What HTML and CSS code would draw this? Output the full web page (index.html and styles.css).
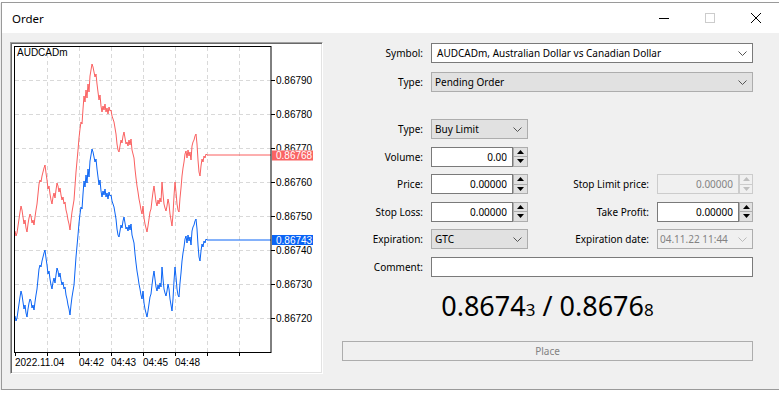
FILE: index.html
```html
<!DOCTYPE html>
<html>
<head>
    <meta charset="UTF-8">
    <title>Order</title>
    <link rel="stylesheet" href="styles.css">
</head>
<body>
    <div class="window">
        <div class="titlebar">
            <span class="title">Order</span>
            <div class="caption">
                <span class="cap-btn"><svg width="12" height="12" viewBox="0 0 12 12"><line x1="1" y1="6.5" x2="11" y2="6.5" stroke="#000"/></svg></span>
                <span class="cap-btn"><svg width="12" height="12" viewBox="0 0 12 12"><rect x="1.5" y="1.5" width="9" height="9" fill="none" stroke="#cccccc"/></svg></span>
                <span class="cap-btn"><svg width="12" height="12" viewBox="0 0 12 12"><path d="M1 1 L11 11 M11 1 L1 11" stroke="#000" stroke-width="1"/></svg></span>
            </div>
        </div>

        <div class="dialog">
            <div class="chart-box">
                <svg class="chart" width="309" height="328" viewBox="12 44 309 328">
                    <defs>
                        <polyline id="ticks" fill="none" points="16,317 17,322 18,319 19,312 20,305 21,298 22,292 23,296 24,303 25,310 26,306 27,314 28,318 29,310 30,304 31,300 32,302 33,309 34,306 35,311 36,303 37,296 38,290 39,280 40,270 41,266 42,268 43,262 44,258 45,254 46,251 47,259 48,266 49,275 50,272 51,280 52,286 53,290 54,283 55,279 56,284 57,276 58,269 59,272 60,278 61,274 62,281 63,286 64,283 65,290 66,288 67,296 68,300 69,306 70,310 71,316 72,306 73,298 74,292 75,286 76,272 77,258 78,247 79,236 80,224 81,215 82,208 83,210 84,195 85,182 86,188 87,176 88,184 89,170 90,178 91,162 92,156 93,150 94,153 95,158 96,163 97,160 98,170 99,178 100,186 101,181 102,192 103,198 104,192 105,196 106,190 107,198 108,194 109,200 110,193 111,197 112,196 113,202 114,205 115,208 116,214 117,220 118,230 119,236 120,238 121,232 122,226 123,229 124,222 125,218 126,224 127,230 128,228 129,232 130,226 131,231 132,225 133,236 134,240 135,244 136,255 137,264 138,272 139,278 140,285 141,290 142,296 143,300 144,292 145,304 146,310 147,314 148,318 149,312 150,305 151,298 152,295 153,286 154,278 155,272 156,280 157,288 158,292 159,286 160,290 161,284 162,288 163,268 164,280 165,290 166,294 167,297 168,292 169,285 170,290 171,300 172,306 173,312 174,300 175,282 176,268 177,278 178,290 179,296 180,298 181,284 182,274 183,262 184,254 185,248 186,240 187,237 188,244 189,236 190,242 191,238 192,246 193,232 194,228 195,226 196,222 197,220 198,230 199,246 200,258 201,262 202,252 203,245 204,248 205,242 206,244 207,240 208,241 272,241"/>
                    </defs>

                    <g class="grid">
                        <line x1="16" y1="81.5" x2="272" y2="81.5"/>
                        <line x1="16" y1="115.5" x2="272" y2="115.5"/>
                        <line x1="16" y1="149.5" x2="272" y2="149.5"/>
                        <line x1="16" y1="183.5" x2="272" y2="183.5"/>
                        <line x1="16" y1="217.5" x2="272" y2="217.5"/>
                        <line x1="16" y1="251.5" x2="272" y2="251.5"/>
                        <line x1="16" y1="285.5" x2="272" y2="285.5"/>
                        <line x1="16" y1="319.5" x2="272" y2="319.5"/>
                        <line x1="48.5" y1="48" x2="48.5" y2="353"/>
                        <line x1="80.5" y1="48" x2="80.5" y2="353"/>
                        <line x1="112.5" y1="48" x2="112.5" y2="353"/>
                        <line x1="144.5" y1="48" x2="144.5" y2="353"/>
                        <line x1="176.5" y1="48" x2="176.5" y2="353"/>
                        <line x1="208.5" y1="48" x2="208.5" y2="353"/>
                        <line x1="240.5" y1="48" x2="240.5" y2="353"/>
                    </g>

                    <use href="#ticks" class="ask-line" transform="translate(0,-85)"/>
                    <use href="#ticks" class="bid-line"/>

                    <rect class="frame" x="15.5" y="47.5" width="256.5" height="306"/>

                    <g class="axis-ticks">
                        <line x1="272" y1="81.5" x2="276" y2="81.5"/>
                        <line x1="272" y1="115.5" x2="276" y2="115.5"/>
                        <line x1="272" y1="149.5" x2="276" y2="149.5"/>
                        <line x1="272" y1="183.5" x2="276" y2="183.5"/>
                        <line x1="272" y1="217.5" x2="276" y2="217.5"/>
                        <line x1="272" y1="251.5" x2="276" y2="251.5"/>
                        <line x1="272" y1="285.5" x2="276" y2="285.5"/>
                        <line x1="272" y1="319.5" x2="276" y2="319.5"/>
                        <line x1="16.5" y1="353" x2="16.5" y2="357"/>
                        <line x1="48.5" y1="353" x2="48.5" y2="357"/>
                        <line x1="80.5" y1="353" x2="80.5" y2="357"/>
                        <line x1="112.5" y1="353" x2="112.5" y2="357"/>
                        <line x1="144.5" y1="353" x2="144.5" y2="357"/>
                        <line x1="176.5" y1="353" x2="176.5" y2="357"/>
                        <line x1="208.5" y1="353" x2="208.5" y2="357"/>
                        <line x1="240.5" y1="353" x2="240.5" y2="357"/>
                    </g>

                    <g class="axis-text">
                        <text x="18" y="57">AUDCADm</text>
                        <text x="277" y="85">0.86790</text>
                        <text x="277" y="119">0.86780</text>
                        <text x="277" y="187">0.86760</text>
                        <text x="277" y="221">0.86750</text>
                        <text x="277" y="255">0.86740</text>
                        <text x="277" y="289">0.86730</text>
                        <text x="277" y="323">0.86720</text>
                        <text x="16" y="367">2022.11.04</text>
                        <text x="80" y="367">04:42</text>
                        <text x="112" y="367">04:43</text>
                        <text x="144" y="367">04:45</text>
                        <text x="176" y="367">04:48</text>
                    </g>

                    <!-- the 0.86770 label sits under the ask tag, only its top shows -->
                    <clipPath id="peek">
                        <rect x="272" y="140" width="48" height="11.5"/>
                    </clipPath>
                    <text class="peek-text" x="277" y="153" clip-path="url(#peek)">0.86770</text>

                    <rect class="ask-tag" x="273" y="151.5" width="41" height="10"/>
                    <text class="tag-text" x="277" y="160">0.86768</text>
                    <rect class="bid-tag" x="273" y="236" width="41" height="10"/>
                    <text class="tag-text" x="277" y="244.5">0.86743</text>
                </svg>
            </div>

            <div class="order-form">
                <div class="fields top">
                    <label class="lbl">Symbol:</label>
                    <div class="combo edit span3">
                        <span>AUDCADm, Australian Dollar vs Canadian Dollar</span>
                        <svg class="chev" width="9" height="5" viewBox="0 0 9 5"><polyline points="0.5,0.5 4.5,4.5 8.5,0.5" fill="none" stroke="#555"/></svg>
                    </div>
                    <label class="lbl">Type:</label>
                    <div class="combo span3">
                        <span>Pending Order</span>
                        <svg class="chev" width="9" height="5" viewBox="0 0 9 5"><polyline points="0.5,0.5 4.5,4.5 8.5,0.5" fill="none" stroke="#555"/></svg>
                    </div>
                </div>

                <div class="fields main">
                    <label class="lbl">Type:</label>
                    <div class="combo">
                        <span>Buy Limit</span>
                        <svg class="chev" width="9" height="5" viewBox="0 0 9 5"><polyline points="0.5,0.5 4.5,4.5 8.5,0.5" fill="none" stroke="#555"/></svg>
                    </div>

                    <label class="lbl">Volume:</label>
                    <div class="spin">
                        <input type="text" value="0.00">
                        <div class="spin-btns">
                            <span><svg width="7" height="4" viewBox="0 0 7 4"><polygon points="3.5,0 7,4 0,4"/></svg></span>
                            <span><svg width="7" height="4" viewBox="0 0 7 4"><polygon points="0,0 7,0 3.5,4"/></svg></span>
                        </div>
                    </div>

                    <label class="lbl">Price:</label>
                    <div class="spin">
                        <input type="text" value="0.00000">
                        <div class="spin-btns">
                            <span><svg width="7" height="4" viewBox="0 0 7 4"><polygon points="3.5,0 7,4 0,4"/></svg></span>
                            <span><svg width="7" height="4" viewBox="0 0 7 4"><polygon points="0,0 7,0 3.5,4"/></svg></span>
                        </div>
                    </div>
                    <label class="lbl2">Stop Limit price:</label>
                    <div class="spin disabled">
                        <input type="text" value="0.00000" disabled>
                        <div class="spin-btns">
                            <span><svg width="7" height="4" viewBox="0 0 7 4"><polygon points="3.5,0 7,4 0,4"/></svg></span>
                            <span><svg width="7" height="4" viewBox="0 0 7 4"><polygon points="0,0 7,0 3.5,4"/></svg></span>
                        </div>
                    </div>

                    <label class="lbl">Stop Loss:</label>
                    <div class="spin">
                        <input type="text" value="0.00000">
                        <div class="spin-btns">
                            <span><svg width="7" height="4" viewBox="0 0 7 4"><polygon points="3.5,0 7,4 0,4"/></svg></span>
                            <span><svg width="7" height="4" viewBox="0 0 7 4"><polygon points="0,0 7,0 3.5,4"/></svg></span>
                        </div>
                    </div>
                    <label class="lbl2">Take Profit:</label>
                    <div class="spin">
                        <input type="text" value="0.00000">
                        <div class="spin-btns">
                            <span><svg width="7" height="4" viewBox="0 0 7 4"><polygon points="3.5,0 7,4 0,4"/></svg></span>
                            <span><svg width="7" height="4" viewBox="0 0 7 4"><polygon points="0,0 7,0 3.5,4"/></svg></span>
                        </div>
                    </div>

                    <label class="lbl">Expiration:</label>
                    <div class="combo">
                        <span>GTC</span>
                        <svg class="chev" width="9" height="5" viewBox="0 0 9 5"><polyline points="0.5,0.5 4.5,4.5 8.5,0.5" fill="none" stroke="#555"/></svg>
                    </div>
                    <label class="lbl2">Expiration date:</label>
                    <div class="combo disabled">
                        <span>04.11.22 11:44</span>
                        <svg class="chev" width="9" height="5" viewBox="0 0 9 5"><polyline points="0.5,0.5 4.5,4.5 8.5,0.5" fill="none" stroke="#bbb"/></svg>
                    </div>

                    <label class="lbl">Comment:</label>
                    <input class="comment span3" type="text" value="">
                </div>

                <div class="quote">0.8674<small>3</small> / 0.8676<small>8</small></div>

                <button class="place" disabled>Place</button>
            </div>
        </div>
    </div>
</body>
</html>
```

FILE: styles.css
```css
* {
    margin: 0;
    padding: 0;
    box-sizing: border-box;
}

body {
    background: #fff;
    overflow: hidden;
    font-family: "Noto Sans", "Liberation Sans", sans-serif;
    font-size: 10px;
    color: #000;
}

.window {
    width: 778px;
    height: 388px;
    margin: 2px 0 0 1px;
    border: 1px solid #9a9a9a;
    border-right: none;
    background: #f0f0f0;
    display: flex;
    flex-direction: column;
    box-shadow: 0 1px 1px rgba(0, 0, 0, 0.4);
}

.titlebar {
    height: 30px;
    background: #fff;
    display: flex;
    align-items: center;
    padding-left: 10px;
}

.title {
    flex: 1;
    font-size: 11.5px;
}

.caption {
    display: flex;
    height: 100%;
}

.cap-btn {
    width: 46px;
    display: flex;
    align-items: center;
    justify-content: center;
}

.dialog {
    flex: 1;
    display: flex;
    padding-left: 8px;
}

.chart-box {
    width: 313px;
    height: 332px;
    margin-top: 9px;
    margin-right: 19px;
    background: #fff;
    border: 1px solid;
    border-color: #a0a0a0 #fff #fff #a0a0a0;
    box-shadow: inset 1px 1px 0 #696969, inset -1px -1px 0 #e3e3e3;
}

.chart {
    display: block;
    font-family: "Liberation Sans", Arial, sans-serif;
    font-size: 10px;
}

.grid line {
    stroke: #d9d9d9;
    stroke-width: 1;
    stroke-dasharray: 4 3;
}

.frame {
    fill: none;
    stroke: #000;
}

.axis-ticks line {
    stroke: #000;
}

.axis-text text,
.peek-text {
    fill: #000;
}

.ask-line {
    stroke: #fa5f5f;
    stroke-width: 1;
}

.bid-line {
    stroke: #0a64f5;
    stroke-width: 1;
}

.ask-tag {
    fill: #fa6464;
}

.bid-tag {
    fill: #0a64f5;
}

.tag-text {
    fill: #fff;
}

.order-form {
    width: 411px;
    padding-top: 10px;
}

.fields {
    display: grid;
    grid-template-columns: 81px 97px 1fr 96px;
    grid-auto-rows: 20px;
    column-gap: 8px;
    align-items: center;
}

.fields.top {
    row-gap: 9px;
    margin-bottom: 27px;
}

.fields.main {
    row-gap: 7.5px;
}

.lbl {
    grid-column: 1;
    text-align: right;
}

.lbl2 {
    grid-column: 3;
    text-align: right;
}

.span3 {
    grid-column: 2 / 5;
}

.combo {
    height: 20px;
    display: flex;
    align-items: center;
    justify-content: space-between;
    padding: 0 5px 0 3px;
    background: #e1e1e1;
    border: 1px solid #adadad;
}

.combo.edit {
    background: #fff;
    border-color: #7a7a7a;
    padding-left: 5px;
}

.combo.disabled {
    background: #f0f0f0;
    border-color: #adadad;
    color: #838383;
    padding-left: 2px;
}

.spin {
    height: 20px;
    display: flex;
}

.spin input,
.comment {
    height: 20px;
    font-family: inherit;
    font-size: 10px;
    color: #000;
    background: #fff;
    border: 1px solid #7a7a7a;
    outline: none;
}

.spin input {
    width: 82px;
    text-align: right;
    padding-right: 5px;
}

.spin-btns {
    width: 15px;
    display: flex;
    flex-direction: column;
    border: 1px solid #adadad;
    background: #e1e1e1;
}

.spin-btns span {
    flex: 1;
    display: flex;
    align-items: center;
    justify-content: center;
}

.spin-btns span + span {
    border-top: 1px solid #adadad;
}

.spin-btns svg {
    fill: #000;
}

.spin.disabled input {
    background: #f0f0f0;
    border-color: #cccccc;
    color: #838383;
}

.spin.disabled .spin-btns {
    background: #f0f0f0;
    border-color: #cccccc;
}

.spin.disabled .spin-btns span + span {
    border-top-color: #cccccc;
}

.spin.disabled .spin-btns svg {
    fill: #bfbfbf;
}

.comment {
    width: 100%;
}

.quote {
    margin-top: 14.5px;
    text-align: center;
    font-size: 27px;
    line-height: 30px;
}

.quote small {
    font-size: 17px;
}

.place {
    display: block;
    width: 100%;
    height: 20px;
    margin-top: 15.5px;
    font-family: inherit;
    font-size: 10px;
    color: #838383;
    background: #f0f0f0;
    border: 1px solid #adadad;
}
```
